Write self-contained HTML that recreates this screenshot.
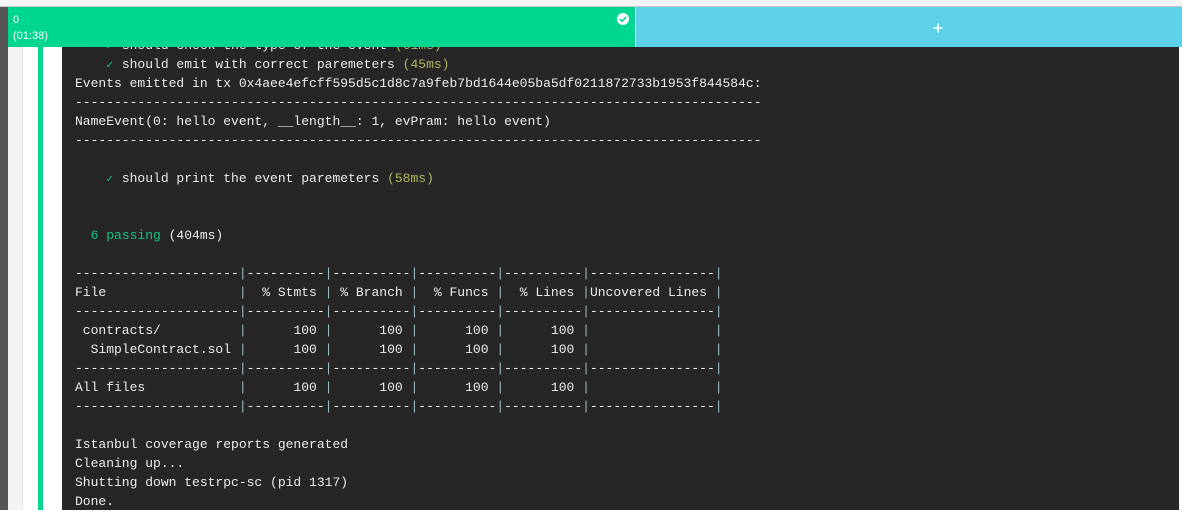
<!DOCTYPE html>
<html><head><meta charset="utf-8"><style>
html,body{margin:0;padding:0;width:1182px;height:510px;overflow:hidden;background:#fff}
div{position:absolute}
pre{position:absolute;left:75px;top:36px;margin:0;font:13px/19px "Liberation Mono",monospace;color:#ececec;white-space:pre}
.g{color:#10c47f}.y{color:#b3b35e}
.c{display:inline-block;width:7.8px;margin-left:-.6px;margin-right:.6px;color:#10c47f;font-family:"DejaVu Sans",sans-serif;font-size:10px;line-height:10px}
.p{color:#9cbcc6}
</style></head><body>
<div style="left:0;top:0;width:1182px;height:6px;background:#f5f5f5"></div>
<div style="left:0;top:6px;width:1182px;height:1px;background:#c8c8c8"></div>
<div style="left:0;top:7px;width:8px;height:503px;background:#555"></div>
<div style="left:8px;top:47px;width:14px;height:463px;background:#f3f3f3"></div>
<div style="left:22px;top:47px;width:1px;height:463px;background:#e8e8e8"></div>
<div style="left:38px;top:47px;width:5px;height:463px;background:#00d68f"></div>
<div style="left:62px;top:47px;width:1117px;height:463px;background:#262626"></div>
<pre>    <span class="c">✓</span> should check the type of the event <span class="y">(61ms)</span>
    <span class="c">✓</span> should emit with correct paremeters <span class="y">(45ms)</span>
Events emitted in tx 0x4aee4efcff595d5c1d8c7a9feb7bd1644e05ba5df0211872733b1953f844584c:
----------------------------------------------------------------------------------------
NameEvent(0: hello event, __length__: 1, evPram: hello event)
----------------------------------------------------------------------------------------

    <span class="c">✓</span> should print the event paremeters <span class="y">(58ms)</span>


  <span class="g">6 passing</span> (404ms)

---------------------<span class="p">|</span>----------<span class="p">|</span>----------<span class="p">|</span>----------<span class="p">|</span>----------<span class="p">|</span>----------------<span class="p">|</span>
File                 <span class="p">|</span>  % Stmts <span class="p">|</span> % Branch <span class="p">|</span>  % Funcs <span class="p">|</span>  % Lines <span class="p">|</span>Uncovered Lines <span class="p">|</span>
---------------------<span class="p">|</span>----------<span class="p">|</span>----------<span class="p">|</span>----------<span class="p">|</span>----------<span class="p">|</span>----------------<span class="p">|</span>
 contracts/          <span class="p">|</span>      100 <span class="p">|</span>      100 <span class="p">|</span>      100 <span class="p">|</span>      100 <span class="p">|</span>                <span class="p">|</span>
  SimpleContract.sol <span class="p">|</span>      100 <span class="p">|</span>      100 <span class="p">|</span>      100 <span class="p">|</span>      100 <span class="p">|</span>                <span class="p">|</span>
---------------------<span class="p">|</span>----------<span class="p">|</span>----------<span class="p">|</span>----------<span class="p">|</span>----------<span class="p">|</span>----------------<span class="p">|</span>
All files            <span class="p">|</span>      100 <span class="p">|</span>      100 <span class="p">|</span>      100 <span class="p">|</span>      100 <span class="p">|</span>                <span class="p">|</span>
---------------------<span class="p">|</span>----------<span class="p">|</span>----------<span class="p">|</span>----------<span class="p">|</span>----------<span class="p">|</span>----------------<span class="p">|</span>

Istanbul coverage reports generated
Cleaning up...
Shutting down testrpc-sc (pid 1317)
Done.</pre>
<div style="left:8px;top:7px;width:627px;height:40px;background:#00d68f"></div>
<div style="left:635px;top:7px;width:1px;height:40px;background:#fff"></div>
<div style="left:636px;top:7px;width:546px;height:40px;background:#5dd1e8"></div>
<div style="left:13px;top:12px;font:11px/16px 'Liberation Sans',sans-serif;color:#fff">0<br>(01:38)</div>
<svg style="position:absolute;left:617px;top:13px" width="12" height="12" viewBox="0 0 12 12"><circle cx="6" cy="6" r="6" fill="#fff"/><path d="M2.9 6.1L5 8.2L9.2 3.9" fill="none" stroke="#00d68f" stroke-width="1.6"/></svg>
<svg style="position:absolute;left:933px;top:23px" width="10" height="10" viewBox="0 0 10 10"><path d="M0.5 5H9.5M5 .5V9.5" stroke="#fff" stroke-width="1.6"/></svg>
</body></html>
